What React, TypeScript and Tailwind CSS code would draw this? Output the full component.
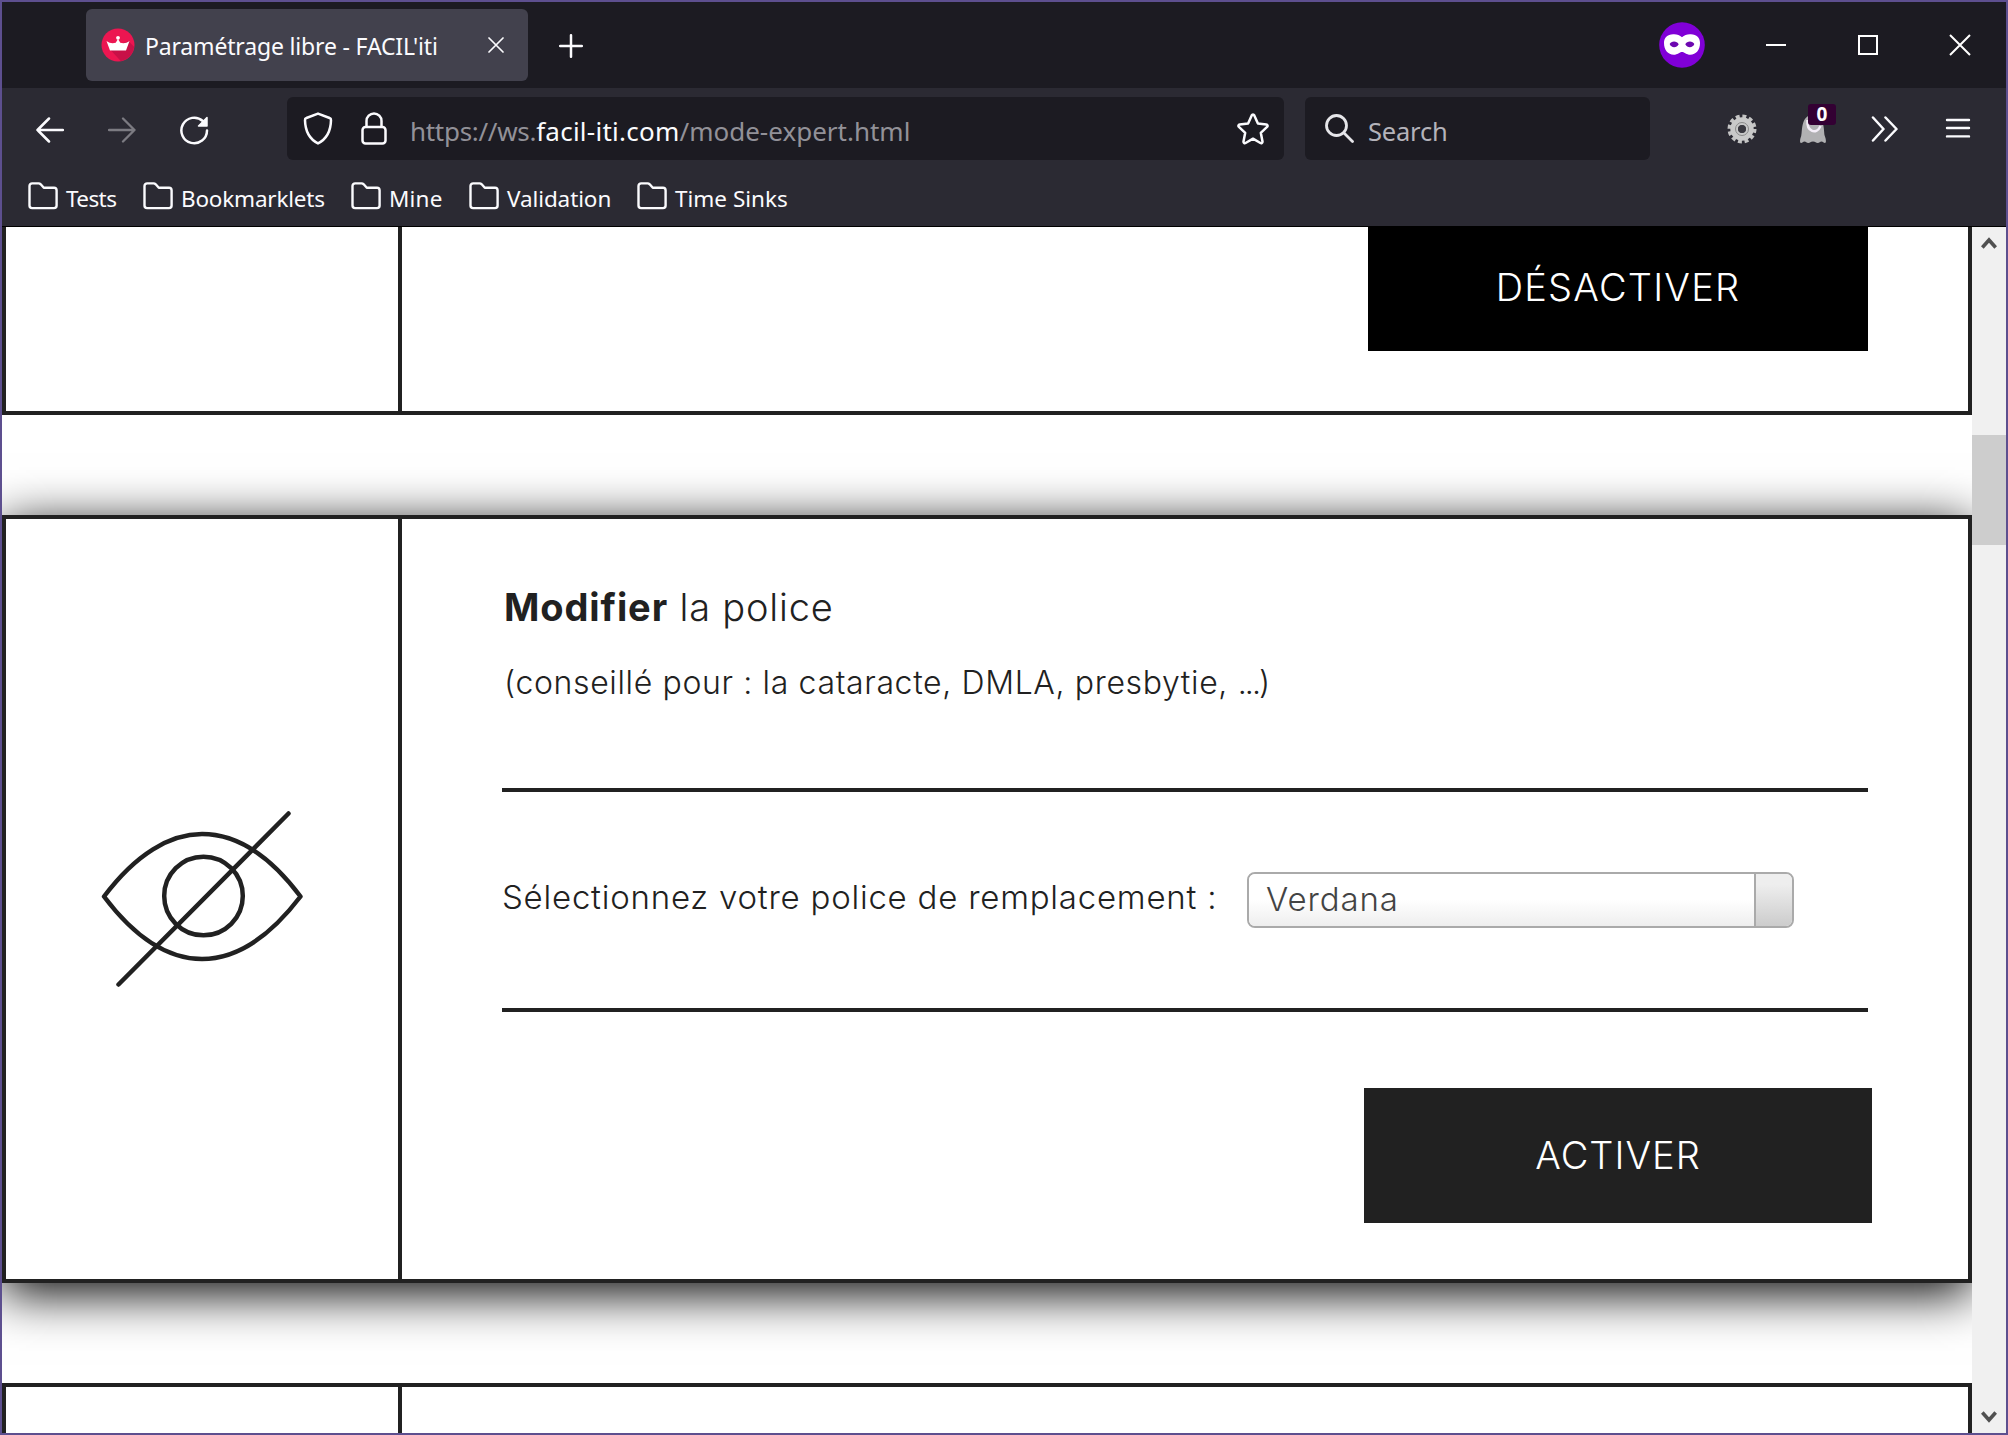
import type { ReactNode } from "react";

function Folder() {
  return (
    <svg width="30" height="28" viewBox="0 0 30 28" fill="none" stroke="#fbfbfe" strokeWidth="2.4" strokeLinejoin="round" className="shrink-0">
      <path d="M1.500 23.500V4a2.600 2.600 0 0 1 2.600-2.600H10.500a3 3 0 0 1 2.200.9L15.800 5.800H26a2.600 2.600 0 0 1 2.600 2.600V23.500A2.600 2.600 0 0 1 26 26.100H4.100A2.600 2.600 0 0 1 1.500 23.500Z" />
    </svg>
  );
}

const bookmarks = [
  { label: "Tests", box: "w-[115px]", text: "tracking-[-0.6px]" },
  { label: "Bookmarklets", box: "w-[208px]", text: "tracking-[-0.2px]" },
  { label: "Mine", box: "w-[118px]", text: "tracking-[0.2px]" },
  { label: "Validation", box: "w-[168px]", text: "tracking-[-0.1px]" },
  { label: "Time Sinks", box: "w-[170px]", text: "" },
];

function TabStrip() {
  return (
    <div className="flex h-[86px] items-start bg-[#1c1b22]">
      <div className="mt-[7px] ml-[84px] flex h-[72px] w-[442px] items-center rounded-[6px] bg-[#42414d] pl-[15px]">
        <svg width="34" height="34" viewBox="0 0 34 34" className="shrink-0">
          <circle cx="17" cy="17" r="16.500" fill="#ec1651" />
          <path d="M9 20.500 27.500 13 33.200 19A17 17 0 0 1 20 33.200L9.500 22Z" fill="#c81148" />
          <path d="M5.500 13c3.200 2.200 6 2.600 9.200 1.700L17 11l2.300 3.700c3.200.9 6 .5 9.200-1.700L25 22.500H9Z" fill="#fff" />
          <circle cx="17" cy="9.800" r="1.900" fill="#fff" />
        </svg>
        <span className="mt-[2px] ml-[10px] w-[343px] text-[23px] leading-8 tracking-[-0.17px] text-[#fbfbfe]">Paramétrage libre - FACIL'iti</span>
        <svg width="16" height="16" viewBox="0 0 16 16" fill="none" stroke="#fbfbfe" strokeWidth="1.700" strokeLinecap="round">
          <path d="M1 1l14 14M15 1 1 15" />
        </svg>
      </div>
      <svg width="24" height="24" viewBox="0 0 24 24" fill="none" stroke="#fbfbfe" strokeWidth="2.500" strokeLinecap="round" className="mt-[32px] ml-[31px]">
        <path d="M12 1.200v21.600M1.200 12h21.600" />
      </svg>
      <div className="mr-[35px] ml-auto flex h-[86px] items-center">
        <svg width="46" height="46" viewBox="0 0 46 46" className="mr-[61px]">
          <circle cx="23" cy="23" r="22.800" fill="#8000d7" />
          <path d="M23 15.200c2.300-2.400 5.400-3.200 8.800-3 6 .4 9.200 3.600 9.200 8.800 0 7-3.900 11.700-9.800 11.700-3.700 0-5.600-2.800-8.200-2.800s-4.500 2.800-8.200 2.800C8.900 32.700 5 28 5 21c0-5.200 3.200-8.400 9.200-8.800 3.400-.2 6.500.6 8.800 3Z" fill="#fff" />
          <path d="M10.700 22c1.300-3.400 7.400-3.600 9 .3-1.900 3.900-7.700 3.800-9-.3ZM35.300 22c-1.300-3.400-7.400-3.600-9 .3 1.900 3.900 7.700 3.800 9-.3Z" fill="#6d08b0" />
        </svg>
        <svg width="20" height="22" viewBox="0 0 20 22" stroke="#fff" strokeWidth="2" className="mr-[72px] mb-[1px]">
          <path d="M0 11h20" />
        </svg>
        <svg width="20" height="20" viewBox="0 0 20 20" fill="none" stroke="#fff" strokeWidth="2" className="mr-[71px]">
          <path d="M1 1h18v18H1Z" />
        </svg>
        <svg width="22" height="22" viewBox="0 0 22 22" fill="none" stroke="#fff" strokeWidth="2">
          <path d="M1 1l20 20M21 1 1 21" />
        </svg>
      </div>
    </div>
  );
}

function Toolbar() {
  return (
    <div className="flex h-[82px] bg-[#2b2a33]">
      <div className="mt-[9px] flex h-[66px] w-[285px] items-center pl-[34px]">
        <svg width="28" height="26" viewBox="0 0 28 26" fill="none" stroke="#fbfbfe" strokeWidth="2.500" strokeLinecap="round" strokeLinejoin="round">
          <path d="M27 13H1.500M13 1.500 1.500 13 13 24.500" />
        </svg>
        <svg width="28" height="26" viewBox="0 0 28 26" fill="none" stroke="#7c7b82" strokeWidth="2.300" strokeLinecap="round" strokeLinejoin="round" className="ml-[44px]">
          <path d="M1 13h25.500M15 1.500 26.500 13 15 24.500" />
        </svg>
        <svg width="30" height="30" viewBox="0 0 30 30" fill="none" stroke="#fbfbfe" strokeWidth="2.500" strokeLinecap="round" className="ml-[43px]">
          <path d="M28 15.500A12.800 12.800 0 1 1 23.800 6" />
          <path d="M28 2.500V11H19.500Z" fill="#fbfbfe" strokeWidth="1.500" strokeLinejoin="round" />
        </svg>
      </div>
      <div className="mt-[9px] flex h-[63px] w-[997px] items-center rounded-[6px] bg-[#1c1b22] pl-[16px]">
        <svg width="30" height="33" viewBox="0 0 30 33" fill="none" stroke="#fbfbfe" strokeWidth="2.500" strokeLinejoin="round" className="shrink-0">
          <path d="M15 1.600 26.600 6a2 2 0 0 1 1.400 2.100C27.800 18 24.500 26.500 15 31.400 5.500 26.500 2.200 18 2 8.100A2 2 0 0 1 3.400 6Z" />
        </svg>
        <svg width="26" height="33" viewBox="0 0 26 33" fill="none" stroke="#fbfbfe" strokeWidth="2.500" strokeLinejoin="round" className="ml-[28px] shrink-0">
          <rect x="1.500" y="15" width="23" height="16.500" rx="3" />
          <path d="M5.500 15V9a7.500 7.500 0 0 1 15 0v6" />
        </svg>
        <span className="mt-[5px] ml-[23px] flex w-[827px] text-[26px] leading-9 text-[#929198]">
          <span className="tracking-[-0.300px]">https://ws.</span>
          <span className="tracking-[0.250px] text-[#fbfbfe]">facil-iti.com</span>
          <span>/mode-expert.html</span>
        </span>
        <svg width="32" height="32" viewBox="0 0 32 32" fill="none" stroke="#fbfbfe" strokeWidth="2.500" strokeLinejoin="round" className="shrink-0">
          <path d="M14.700 2.400a1.450 1.450 0 0 1 2.600 0l3.600 8 8.400 1a1.450 1.450 0 0 1 .8 2.500l-6.300 5.900 1.700 8.700a1.450 1.450 0 0 1-2.100 1.500L16 25.700 8.600 30a1.450 1.450 0 0 1-2.100-1.500l1.700-8.700-6.300-5.900a1.450 1.450 0 0 1 .8-2.500l8.400-1Z" />
        </svg>
      </div>
      <div className="mt-[9px] ml-[21px] flex h-[63px] w-[345px] items-center rounded-[6px] bg-[#1c1b22] pl-[20px]">
        <svg width="29" height="29" viewBox="0 0 29 29" fill="none" stroke="#e6e6ea" strokeWidth="2.800" strokeLinecap="round">
          <circle cx="11.500" cy="11.500" r="10" />
          <path d="M19 19l8.500 8.500" />
        </svg>
        <span className="mt-[5px] ml-[14px] text-[25.500px] leading-9 tracking-[-0.200px] text-[#b4b3ba]">Search</span>
      </div>
      <div className="ml-[77px] flex h-[82px] items-center">
        <svg width="30" height="30" viewBox="-15 -15 30 30" className="mb-px">
          <circle r="12.700" fill="none" stroke="#c4c4c4" strokeWidth="3.600" strokeDasharray="3.900 2.750" />
          <circle r="7.700" fill="none" stroke="#c9c9c9" strokeWidth="8" />
          <circle r="6.500" fill="none" stroke="#8a8a8a" strokeWidth="1" />
          <circle r="4" fill="#3a3940" />
        </svg>
        <div className="relative ml-[42px] h-[30px] w-[28px]">
          <svg width="28" height="30" viewBox="0 0 28 30">
            <path d="M2 29C.5 29 1 25 2.200 22 3.500 18 1.500 1 14 1s10.500 17 11.800 21c1.200 3 1.700 7 .2 7-1.500 0-2-1.500-3.500-1.500S20.500 29 18.700 29s-2.200-1.500-4.700-1.500S11.100 29 9.300 29 7 27.500 5.500 27.500 3.500 29 2 29Z" fill="#b1b1b3" />
            <path d="M8.500 6c-1 12 9 15 13 6" fill="none" stroke="#f4eef8" strokeWidth="2.500" />
          </svg>
          <span className="absolute -top-[10px] left-[9px] h-[21px] w-[28px] rounded-[3px] bg-[#330033] text-center text-[19px] leading-[21px] font-bold text-white">0</span>
        </div>
        <svg width="28" height="26" viewBox="0 0 28 26" fill="none" stroke="#fbfbfe" strokeWidth="2.500" strokeLinecap="round" strokeLinejoin="round" className="ml-[44px]">
          <path d="M2 1.500 12.500 13 2 24.500M14.500 1.500 25.500 13 14.500 24.500" />
        </svg>
        <svg width="26" height="20" viewBox="0 0 26 20" stroke="#fbfbfe" strokeWidth="2.400" strokeLinecap="round" className="mb-[2px] ml-[46px]">
          <path d="M2 2h22M2 10h22M2 18.400h22" />
        </svg>
      </div>
    </div>
  );
}

function BookmarkBar() {
  return (
    <div className="flex h-[57px] border-b border-black bg-[#2b2a33] pl-[26px]">
      {bookmarks.map((b) => (
        <div key={b.label} className={"flex h-[52px] items-center " + b.box}>
          <Folder />
          <span className={"mt-[5px] ml-[8px] whitespace-nowrap text-[22.500px] leading-8 text-[#fbfbfe] " + b.text}>{b.label}</span>
        </div>
      ))}
    </div>
  );
}

function Card({ className, icon, children }: { className: string; icon?: ReactNode; children?: ReactNode }) {
  return (
    <section className={"flex shrink-0 border-x-4 border-[#212121] bg-white " + className}>
      <div className="flex w-[396px] shrink-0 items-start border-r-4 border-[#212121]">{icon}</div>
      <div className="flex-1 px-[100px]">{children}</div>
    </section>
  );
}

function EyeOff() {
  return (
    <svg width="206" height="182" viewBox="100 807 206 182" fill="none" stroke="#212121" strokeWidth="4.500" strokeLinecap="round" strokeLinejoin="round" className="mt-[288px] ml-[94px]">
      <path d="M104 896.500C136 854 170 834 202 834S268 853 300.500 896.500C268 939 235 959 202 959S136 939 104 896.500Z" />
      <circle cx="203.500" cy="896" r="39.300" />
      <path d="M288.500 813.500 118.500 984.500" />
    </svg>
  );
}

function Page() {
  return (
    <main className="flex w-[1970px] flex-col overflow-hidden bg-white font-light text-[#212121] [font-family:Inter,'Liberation_Sans',sans-serif]">
      <Card className="h-[188px] border-b-4">
        <button className="ml-auto flex h-[124px] w-[500px] items-center justify-center bg-black pb-[3px] text-[38px] tracking-[1.200px] text-white">DÉSACTIVER</button>
      </Card>
      <Card className="relative mt-[100px] h-[768px] border-y-4 shadow-[0_10px_48px_#000]" icon={<EyeOff />}>
        <h2 className="pt-[64px] pl-[2px] text-[38px] leading-[48px] tracking-[0.800px]">
          <strong className="font-bold tracking-[0.900px]">Modifier</strong> la police
        </h2>
        <p className="mt-[32px] pl-[2px] text-[32px] leading-[40px] tracking-[0.640px]">
          (conseillé pour : la cataracte, DMLA, presbytie, <span className="tracking-[-1.900px]">...</span>)
        </p>
        <div className="mt-[85px] flex h-[224px] items-center border-y-4 border-[#212121]">
          <span className="w-[745px] pb-[7px] text-[33px] leading-[40px] tracking-[0.770px] whitespace-nowrap">Sélectionnez votre police de remplacement :</span>
          <div className="flex h-[56px] w-[547px] overflow-hidden rounded-[8px] border-2 border-[#aaa] text-[#444]">
            <span className="flex-1 bg-linear-to-b from-white from-50% to-[#eee] pl-[17px] text-[33px] leading-[51px] tracking-[0.900px]">Verdana</span>
            <span className="w-[38px] border-l-2 border-[#aaa] bg-linear-to-b from-[#eee] from-20% to-[#ccc]" />
          </div>
        </div>
        <button className="mt-[76px] -mr-1 ml-auto flex h-[135px] w-[508px] items-center justify-center bg-[#212121] text-[38px] tracking-[1px] text-white">ACTIVER</button>
      </Card>
      <Card className="relative mt-[100px] h-[60px] border-t-4" />
    </main>
  );
}

function Scrollbar() {
  return (
    <div className="flex w-[34px] flex-col items-center bg-[#f0f0f0]">
      <svg width="16" height="14" viewBox="0 0 16 14" fill="none" stroke="#505050" strokeWidth="3.600" className="mt-[9px]">
        <path d="M1.300 11.500 8 4l6.700 7.500" />
      </svg>
      <div className="mt-[185px] h-[110px] w-full bg-[#cdcdcd]" />
      <svg width="16" height="14" viewBox="0 0 16 14" fill="none" stroke="#505050" strokeWidth="3.600" className="mt-auto mb-[9px]">
        <path d="M1.300 2.500 8 10l6.700-7.500" />
      </svg>
    </div>
  );
}

export default function App() {
  return (
    <div className="flex h-[1435px] w-[2008px] flex-col overflow-hidden border-2 border-[#5d4f8f] [font-family:'Noto_Sans','Open_Sans',sans-serif]">
      <TabStrip />
      <Toolbar />
      <BookmarkBar />
      <div className="flex min-h-0 flex-1">
        <Page />
        <Scrollbar />
      </div>
    </div>
  );
}
